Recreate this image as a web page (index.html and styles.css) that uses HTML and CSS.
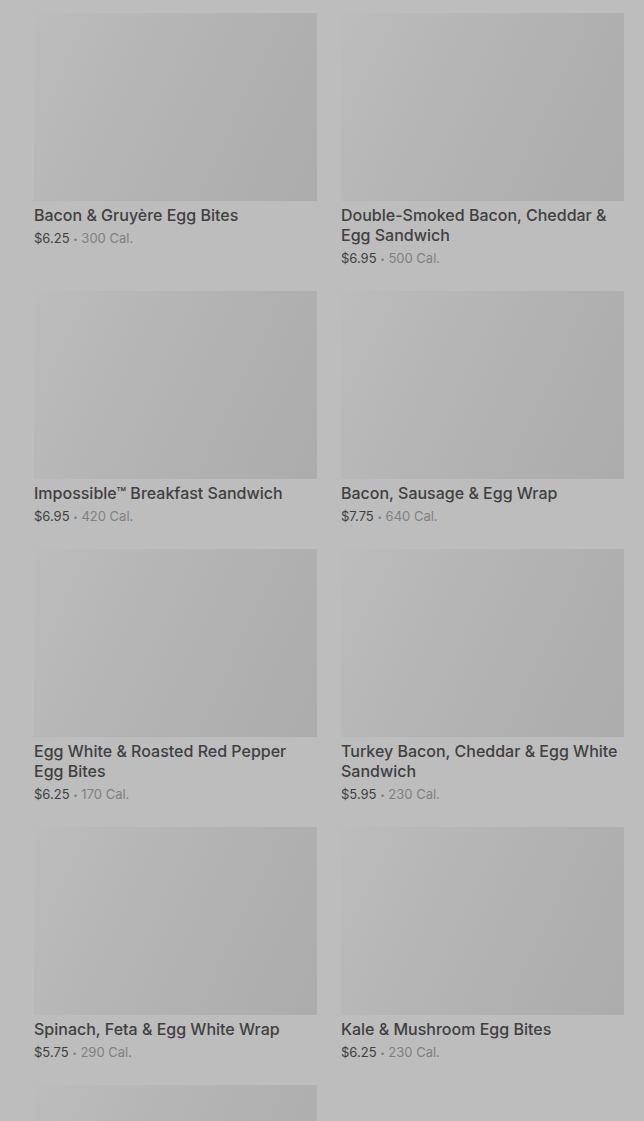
FILE: index.html
```html
<!DOCTYPE html>
<html lang="en">
<head>
  <meta charset="UTF-8">
  <meta name="viewport" content="width=device-width, initial-scale=1.0">
  <title>Breakfast</title>
  <link rel="stylesheet" href="styles.css">
</head>
<body>
  <div class="menu-grid">
    <div class="item">
      <div class="item-image"></div>
      <div class="item-name">Bacon &amp; Gruyère Egg Bites</div>
      <div class="item-meta"><span class="price">$6.25</span> <span class="dot">•</span> <span class="cal">300 Cal.</span></div>
    </div>
    <div class="item">
      <div class="item-image"></div>
      <div class="item-name">Double-Smoked Bacon, Cheddar &amp; Egg Sandwich</div>
      <div class="item-meta"><span class="price">$6.95</span> <span class="dot">•</span> <span class="cal">500 Cal.</span></div>
    </div>
    <div class="item">
      <div class="item-image"></div>
      <div class="item-name">Impossible™ Breakfast Sandwich</div>
      <div class="item-meta"><span class="price">$6.95</span> <span class="dot">•</span> <span class="cal">420 Cal.</span></div>
    </div>
    <div class="item">
      <div class="item-image"></div>
      <div class="item-name">Bacon, Sausage &amp; Egg Wrap</div>
      <div class="item-meta"><span class="price">$7.75</span> <span class="dot">•</span> <span class="cal">640 Cal.</span></div>
    </div>
    <div class="item">
      <div class="item-image"></div>
      <div class="item-name">Egg White &amp; Roasted Red Pepper Egg Bites</div>
      <div class="item-meta"><span class="price">$6.25</span> <span class="dot">•</span> <span class="cal">170 Cal.</span></div>
    </div>
    <div class="item">
      <div class="item-image"></div>
      <div class="item-name">Turkey Bacon, Cheddar &amp; Egg White Sandwich</div>
      <div class="item-meta"><span class="price">$5.95</span> <span class="dot">•</span> <span class="cal">230 Cal.</span></div>
    </div>
    <div class="item">
      <div class="item-image"></div>
      <div class="item-name">Spinach, Feta &amp; Egg White Wrap</div>
      <div class="item-meta"><span class="price">$5.75</span> <span class="dot">•</span> <span class="cal">290 Cal.</span></div>
    </div>
    <div class="item">
      <div class="item-image"></div>
      <div class="item-name">Kale &amp; Mushroom Egg Bites</div>
      <div class="item-meta"><span class="price">$6.25</span> <span class="dot">•</span> <span class="cal">230 Cal.</span></div>
    </div>
    <div class="item">
      <div class="item-image"></div>
    </div>
  </div>
</body>
</html>
```

FILE: styles.css
```css
body {
  font-family: Inter, Roboto, "Liberation Sans", sans-serif;
  background-color: #bdbdbd;
  margin: 0;
  padding: 0;
  height: 1121px;
  overflow: hidden;
}

.menu-grid {
  display: grid;
  grid-template-columns: 283px 283px;
  column-gap: 24px;
  row-gap: 22px;
  padding: 13px 20px 0 34px;
}

.item-image {
  height: 188px;
  background: linear-gradient(115deg, #bcbcbc 0%, #b3b3b3 50%, #acacac 100%);
}

.item-name {
  margin-top: 4px;
  font-size: 16px;
  line-height: 20px;
  font-weight: 500;
  color: #404040;
}

.item-meta {
  margin-top: 3px;
  font-size: 13px;
  line-height: 20px;
  color: #808080;
}

.item-meta .price {
  color: #404040;
}

.item-meta .dot {
  font-size: 8px;
  vertical-align: 1px;
}
```
